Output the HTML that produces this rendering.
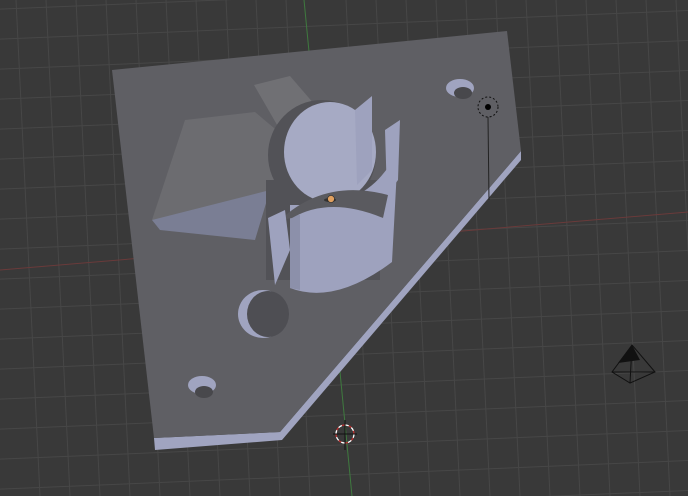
<!DOCTYPE html><html><head><style>html,body{margin:0;padding:0;background:#393939;overflow:hidden}svg{display:block}</style></head><body>
<svg width="688" height="496" viewBox="0 0 688 496" xmlns="http://www.w3.org/2000/svg">
<rect width="688" height="496" fill="#393939"/>
<g stroke="#474747" stroke-width="1">
<line x1="-20" y1="10" x2="700" y2="-20"/><line x1="-20" y1="40" x2="700" y2="10"/><line x1="-20" y1="70" x2="700" y2="40"/><line x1="-20" y1="100" x2="700" y2="70"/><line x1="-20" y1="130" x2="700" y2="100"/><line x1="-20" y1="160" x2="700" y2="130"/><line x1="-20" y1="190" x2="700" y2="160"/><line x1="-20" y1="220" x2="700" y2="190"/><line x1="-20" y1="250" x2="700" y2="220"/><line x1="-20" y1="280" x2="700" y2="250"/><line x1="-20" y1="310" x2="700" y2="280"/><line x1="-20" y1="340" x2="700" y2="310"/><line x1="-20" y1="370" x2="700" y2="340"/><line x1="-20" y1="400" x2="700" y2="370"/><line x1="-20" y1="430" x2="700" y2="400"/><line x1="-20" y1="460" x2="700" y2="430"/><line x1="-20" y1="490" x2="700" y2="460"/><line x1="-20" y1="520" x2="700" y2="490"/>
<line x1="16" y1="0" x2="40" y2="496"/><line x1="46" y1="0" x2="70" y2="496"/><line x1="76" y1="0" x2="100" y2="496"/><line x1="106" y1="0" x2="130" y2="496"/><line x1="136" y1="0" x2="160" y2="496"/><line x1="166" y1="0" x2="190" y2="496"/><line x1="196" y1="0" x2="220" y2="496"/><line x1="226" y1="0" x2="250" y2="496"/><line x1="256" y1="0" x2="280" y2="496"/><line x1="286" y1="0" x2="310" y2="496"/><line x1="346" y1="0" x2="370" y2="496"/><line x1="376" y1="0" x2="400" y2="496"/><line x1="406" y1="0" x2="430" y2="496"/><line x1="436" y1="0" x2="460" y2="496"/><line x1="466" y1="0" x2="490" y2="496"/><line x1="496" y1="0" x2="520" y2="496"/><line x1="526" y1="0" x2="550" y2="496"/><line x1="556" y1="0" x2="580" y2="496"/><line x1="586" y1="0" x2="610" y2="496"/><line x1="616" y1="0" x2="640" y2="496"/><line x1="646" y1="0" x2="670" y2="496"/><line x1="676" y1="0" x2="700" y2="496"/>
</g>
<line x1="0" y1="270" x2="688" y2="212" stroke="#6a3a3a" stroke-width="1"/>
<line x1="304" y1="0" x2="352" y2="496" stroke="#3f7a3f" stroke-width="1"/>
<polygon points="154,438 280,432 521,151 521,160 282,440 155,450" fill="#a0a4c0"/>
<polygon points="112,70 507,31 521,151 280,432 154,438" fill="#5f5f64"/>
<polygon points="254,85 290,76 315,105 280,130" fill="#707074"/>
<polygon points="185,120 255,112 300,150 270,190 160,222 152,220" fill="#6c6c70"/>
<polygon points="152,220 270,190 255,240 160,230" fill="#7a7e94"/>
<ellipse cx="322" cy="155" rx="54" ry="55" fill="#525257"/>
<rect x="266" y="180" width="114" height="100" fill="#525257"/>
<path d="M290,205 L290,288 Q335,305 392,262 L398,150 Q370,210 300,205 Z" fill="#9ea2be"/>
<path d="M290,215 L300,215 L300,290 L290,288 Z" fill="#8c90aa"/>
<ellipse cx="330" cy="152" rx="46" ry="50" fill="#a6aac4"/>
<path d="M280,220 Q325,178 388,195 L383,218 Q330,196 292,218 Z" fill="#5a5a5f"/>
<polygon points="268,218 285,210 290,250 275,285" fill="#9ea2be"/>
<polygon points="355,110 372,96 372,170 357,185" fill="#9ea2be"/>
<polygon points="385,130 400,120 398,180 387,195" fill="#9ea2be"/>
<ellipse cx="330" cy="200" rx="6" ry="2" fill="#333"/>
<circle cx="331" cy="199" r="3.5" fill="#e0a060" stroke="#222" stroke-width="0.6"/>
<ellipse cx="263" cy="314" rx="25" ry="24" fill="#a0a4c0"/>
<ellipse cx="268" cy="314" rx="21" ry="23" fill="#4e4e53"/>
<ellipse cx="460" cy="88" rx="14" ry="9" fill="#a0a4c0"/><ellipse cx="463" cy="93" rx="9" ry="6" fill="#48484c"/>
<ellipse cx="202" cy="385" rx="14" ry="9" fill="#a0a4c0"/><ellipse cx="204" cy="392" rx="9" ry="6" fill="#48484c"/>
<circle cx="488" cy="107" r="10" fill="none" stroke="#111" stroke-width="1" stroke-dasharray="2,2"/>
<circle cx="488" cy="107" r="3" fill="#000"/>
<line x1="488" y1="117" x2="489" y2="200" stroke="#222" stroke-width="1"/>
<circle cx="345" cy="434" r="9" fill="none" stroke="#fff" stroke-width="1.3" stroke-dasharray="4,3"/>
<circle cx="345" cy="434" r="9" fill="none" stroke="#c03030" stroke-width="1.3" stroke-dasharray="3,4" stroke-dashoffset="3"/>
<line x1="333" y1="434" x2="357" y2="434" stroke="#111"/><line x1="345" y1="420" x2="345" y2="450" stroke="#111"/>
<g fill="none" stroke="#111" stroke-width="1"><polygon points="632,345 612,372 630,383 655,372"/><line x1="632" y1="345" x2="630" y2="383"/><line x1="612" y1="372" x2="655" y2="372"/></g>
<polygon points="632,345 618,363 640,360" fill="#111"/>
</svg>
</body></html>
